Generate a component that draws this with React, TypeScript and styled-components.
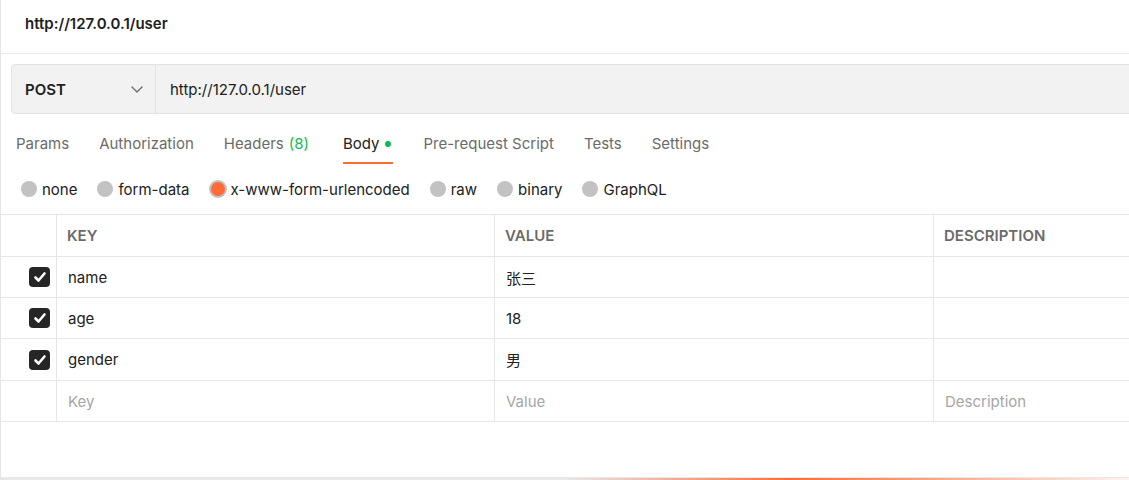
import React from "react";
import styled, { createGlobalStyle } from "styled-components";

const Global = createGlobalStyle`
  html, body { margin: 0; padding: 0; background: #fff; }
  body { font-family: Inter, "Noto Sans CJK SC", sans-serif; color: #212121; }
  * { box-sizing: border-box; }
`;

const Page = styled.div`
  height: 480px;
  border-left: 1px solid #e6e6e6;
  display: flex;
  flex-direction: column;
  overflow: hidden;
`;

const TitleBar = styled.div`
  height: 54px;
  border-bottom: 1px solid #ebebeb;
  display: flex;
  align-items: center;
  padding: 0 0 7px 24px;
  font-size: 15px;
  font-weight: 600;
  color: #212121;
`;

const UrlRow = styled.div`
  padding: 10px 0 0 10px;
`;

const UrlBar = styled.div`
  display: flex;
  height: 50px;
  width: calc(100% + 10px);
  background: #f2f2f2;
  border: 1px solid #e3e3e3;
  border-radius: 4px;
`;

const MethodBox = styled.div`
  width: 144px;
  flex: none;
  display: flex;
  align-items: center;
  justify-content: space-between;
  padding: 0 12px 0 13px;
  border-right: 1px solid #e3e3e3;
  font-size: 15px;
  font-weight: 600;
  color: #212121;
`;

const UrlText = styled.div`
  display: flex;
  align-items: center;
  padding-left: 14px;
  font-size: 15px;
  color: #212121;
`;

const Tabs = styled.div`
  display: flex;
  gap: 30px;
  margin-top: 10px;
  padding-left: 15px;
`;

const Tab = styled.div<{ $active?: boolean }>`
  display: flex;
  align-items: center;
  padding: 10px ${(p) => (p.$active ? "2px" : "0")} 8px 0;
  margin-left: ${(p) => (p.$active ? "4px" : "0")};
  line-height: 20px;
  font-size: 15px;
  color: ${(p) => (p.$active ? "#212121" : "#6b6b6b")};
  border-bottom: 2px solid ${(p) => (p.$active ? "#ff6c37" : "transparent")};
`;

const Count = styled.span`
  color: #0cbb52;
  margin-left: 5px;
`;

const Dot = styled.span`
  width: 6px;
  height: 6px;
  border-radius: 50%;
  background: #0cbb52;
  margin-left: 6px;
`;

const Radios = styled.div`
  display: flex;
  align-items: center;
  gap: 20px;
  height: 50px;
  padding-left: 20px;
`;

const RadioItem = styled.label`
  display: flex;
  align-items: center;
  gap: 5px;
  font-size: 15px;
  color: #212121;
`;

const RadioCircle = styled.span<{ $on?: boolean }>`
  width: ${(p) => (p.$on ? "14px" : "16px")};
  height: ${(p) => (p.$on ? "14px" : "16px")};
  margin: ${(p) => (p.$on ? "0 1px" : "0")};
  border-radius: 50%;
  background: ${(p) => (p.$on ? "#ff6c37" : "#c2c2c2")};
  box-shadow: ${(p) => (p.$on ? "0 0 0 2px #c2c2c2" : "none")};
`;

const Table = styled.div`
  border-top: 1px solid #e6e6e6;
  border-bottom: 1px solid #e6e6e6;
`;

const Row = styled.div<{ $tall?: boolean }>`
  display: grid;
  grid-template-columns: 56px 438px 439px 1fr;
  height: ${(p) => (p.$tall ? "42px" : "41px")};
  & + & {
    border-top: 1px solid #e6e6e6;
  }
`;

const Cell = styled.div<{ $head?: boolean; $muted?: boolean }>`
  display: flex;
  align-items: center;
  padding-left: ${(p) => (p.$head ? "10px" : "11px")};
  border-right: 1px solid #e6e6e6;
  font-size: 15px;
  font-weight: ${(p) => (p.$head ? 600 : 400)};
  color: ${(p) => (p.$head ? "#6b6b6b" : p.$muted ? "#a6a6a6" : "#212121")};
  &:last-child {
    border-right: none;
  }
`;

const CheckCell = styled.div`
  display: flex;
  align-items: center;
  padding-left: 28px;
  border-right: 1px solid #e6e6e6;
`;

const CheckBox = styled.span`
  width: 21px;
  height: 20px;
  border-radius: 4px;
  background: #262626;
  display: flex;
  align-items: center;
  justify-content: center;
`;

const Filler = styled.div`
  flex: 1;
`;

const Footer = styled.div`
  height: 3px;
  flex: none;
  border-top: 1px solid #e8e8e8;
  background: linear-gradient(
    90deg,
    #e8e8e8 0%,
    #e8e8e8 50%,
    #ff6c37 70%,
    #fff3ee 100%
  );
`;

const Chevron = () => (
  <svg width="12" height="12" viewBox="0 0 12 12" fill="none">
    <polyline points="1 4 6 9 11 4" stroke="#6b6b6b" strokeWidth="1.3" strokeLinecap="round" strokeLinejoin="round" />
  </svg>
);

const Tick = () => (
  <svg width="14" height="14" viewBox="0 0 14 14" fill="none">
    <polyline points="2.5 7.5 5.5 10.5 11.5 3.5" stroke="#fff" strokeWidth="2.6" strokeLinecap="round" strokeLinejoin="round" />
  </svg>
);

const rows = [
  { k: "name", v: "张三" },
  { k: "age", v: "18" },
  { k: "gender", v: "男" },
];

const radios = ["none", "form-data", "x-www-form-urlencoded", "raw", "binary", "GraphQL"];

export default function App() {
  return (
    <>
      <Global />
      <Page>
        <TitleBar>http://127.0.0.1/user</TitleBar>
        <UrlRow>
          <UrlBar>
            <MethodBox>
              POST
              <Chevron />
            </MethodBox>
            <UrlText>http://127.0.0.1/user</UrlText>
          </UrlBar>
        </UrlRow>
        <Tabs>
          <Tab>Params</Tab>
          <Tab>Authorization</Tab>
          <Tab>
            Headers<Count>(8)</Count>
          </Tab>
          <Tab $active>
            Body<Dot />
          </Tab>
          <Tab>Pre-request Script</Tab>
          <Tab>Tests</Tab>
          <Tab>Settings</Tab>
        </Tabs>
        <Radios>
          {radios.map((r) => (
            <RadioItem key={r}>
              <RadioCircle $on={r === "x-www-form-urlencoded"} />
              {r}
            </RadioItem>
          ))}
        </Radios>
        <Table>
          <Row>
            <CheckCell />
            <Cell $head>KEY</Cell>
            <Cell $head>VALUE</Cell>
            <Cell $head>DESCRIPTION</Cell>
          </Row>
          {rows.map((r, i) => (
            <Row key={r.k} $tall={i === 2}>
              <CheckCell>
                <CheckBox>
                  <Tick />
                </CheckBox>
              </CheckCell>
              <Cell>{r.k}</Cell>
              <Cell>{r.v}</Cell>
              <Cell />
            </Row>
          ))}
          <Row>
            <CheckCell />
            <Cell $muted>Key</Cell>
            <Cell $muted>Value</Cell>
            <Cell $muted>Description</Cell>
          </Row>
        </Table>
        <Filler />
        <Footer />
      </Page>
    </>
  );
}
